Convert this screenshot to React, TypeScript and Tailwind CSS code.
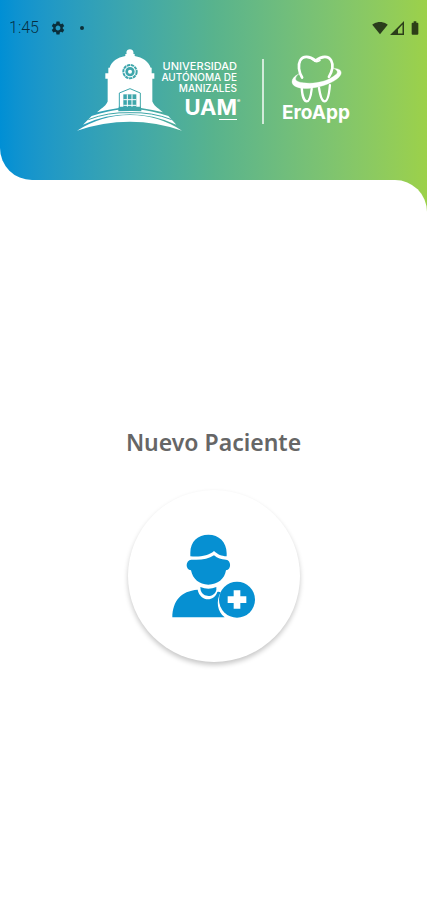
import { MdBatteryFull, MdSettings, MdSignalWifi4Bar } from "react-icons/md";

function StatusBar() {
    return (
        <div className="flex flex-row justify-between items-center h-4 pl-[9px] pr-1 text-black/70">
            <div className="flex flex-row items-center">
                <span className="font-['Roboto'] text-[16px] leading-4 font-light">1:45</span>
                <MdSettings className="ml-[11px] size-4" />
                <span className="ml-[14px] size-1 rounded-full bg-current" />
            </div>

            <div className="flex flex-row items-center">
                <MdSignalWifi4Bar className="size-4" />
                <svg viewBox="0 0 14 14" className="ml-[2px] size-[14px]" fill="currentColor">
                    <path fillRule="evenodd" d="M0 14 14 0V14ZM8 8.500V12.500H12.500V3.500Z" />
                </svg>
                <MdBatteryFull className="ml-[3px] size-4" />
            </div>
        </div>
    );
}

function ChapelLogo() {
    return (
        <svg viewBox="228 147 315 246" className="w-[105px] h-[82px]" fill="white">
            <mask id="chapel" maskUnits="userSpaceOnUse" x="228" y="140" width="320" height="260">
                <rect x="228" y="140" width="320" height="260" fill="white" />
                <g fill="none" stroke="black">
                    <circle cx="387" cy="215" r="20" strokeWidth="6" strokeDasharray="10 2" />
                    <circle cx="387" cy="215" r="10" strokeWidth="8" />
                    <path d="M355 334V279L387 266L418 279V334" strokeWidth="3" />
                </g>
                <path d="M367 283H406V333H367Z" fill="black" />
                <path d="M379 283V333M393 283V333M367 299H406M367 316H406" stroke="white" strokeWidth="3" />
            </mask>
            <g mask="url(#chapel)">
                <path d="M373 168V162H377C371 143 402 143 397 162H401V168C425 172 443 185 449 203H452V220H460V236H454V320H320V236H313V220H322V203H326C331 185 349 172 373 168Z" />
                <path d="M320 305H353V324Q318 329 288 337C298 326 312 321 320 305ZM454 305H420V324Q455 329 486 337C475 326 462 321 454 305Z" />
            </g>
            <path d="M272 348Q325 331 352 329V334Q395 332 421 334V329Q449 331 502 348L526 374Q455 343 387 343Q314 343 246 374Z" />
            <path d="M262 359Q320 336 387 338Q454 336 512 359" fill="none" stroke="#3da6a8" strokeWidth="3" />
            <path d="M228 392Q300 346 387 345Q474 346 543 392Q466 365 387 365Q306 365 228 392Z" />
        </svg>
    );
}

function ToothLogo() {
    return (
        <svg viewBox="876 164 156 145" className="w-[52px] h-12" fill="none" stroke="white" strokeLinecap="round" strokeLinejoin="round">
            <path d="M912 232C902 215 899 194 906 181C915 165 934 167 953 181C972 167 991 165 1000 181C1007 194 1003 213 993 230" strokeWidth="8" />
            <path d="M942 176Q954 189 966 180" strokeWidth="5" />
            <path d="M911 264C912 282 917 304 926 304C936 304 939 284 941 266M963 263C966 283 970 304 980 304C989 304 994 279 996 255" strokeWidth="7" />
            <path d="M902 221C872 236 873 262 918 265C966 266 1026 242 1030 219C1031 208 1020 205 1006 204C1018 209 1023 215 1013 224C992 243 951 253 916 248C889 245 886 235 902 221Z" fill="white" strokeWidth="1" />
        </svg>
    );
}

function PatientIcon() {
    return (
        <svg viewBox="22 28 252 252" className="size-[84px]" fill="#0690d2">
            <path d="M77 95V84C77 50 100 30 131 30C163 30 186 52 186 86V95C170 94 160 90 148 79C131 94 107 97 77 95Z" />
            <path d="M80 105C107 107 131 104 148 92C159 101 169 105 184 105C200 107 201 134 184 137C180 163 159 180 131 180C104 180 84 163 79 137C61 134 62 107 80 105Z" />
            <path d="M23 278C24 229 48 199 99 195C106 230 147 234 158 202C162 200 166 202 168 203C153 231 158 261 180 278Z" />
            <path d="M107 187Q131 197 155 187V196C149 220 115 220 108 197Z" />
            <circle cx="217" cy="225" r="54" />
            <path d="M207 197H227V215H245V235H227V252H207V235H189V215H207Z" fill="white" />
        </svg>
    );
}

export default function App() {
    return (
        <div className="min-h-screen flex flex-col bg-white">
            <header className="h-[180px] pt-5 rounded-bl-[32px] bg-linear-to-r from-[#008fd5] via-[#58b38d] to-[#9cd149]">
                <StatusBar />

                <div className="mt-[13px] flex flex-row justify-center items-start text-white font-['Inter']">
                    <ChapelLogo />
                    <div className="mt-3 -ml-7 flex flex-col items-end text-right">
                        <p className="w-[83px] flex flex-col text-[10px] leading-[11px] font-medium">
                            <span className="text-[11px] leading-[11px]">UNIVERSIDAD</span>
                            <span>AUTÓNOMA DE</span>
                            <span>MANIZALES</span>
                        </p>
                        <p className="relative mt-px text-[22px] leading-6 font-bold">
                            UAM
                            <span className="absolute left-full top-1 text-[5px] leading-[5px]">®</span>
                        </p>
                        <span className="w-[18px] h-px bg-white" />
                    </div>
                    <span className="mt-[10px] ml-[25px] w-[2px] h-[65px] bg-white/70" />
                    <div className="mt-[6px] ml-[18px] flex flex-col items-center">
                        <ToothLogo />
                        <p className="text-[19px] leading-5 font-bold">EroApp</p>
                    </div>
                </div>
            </header>

            <div className="grow flex flex-col bg-linear-to-r from-[#008fd5] via-[#58b38d] to-[#9cd149]">
                <main className="grow flex flex-col justify-center items-center gap-8 pt-2 rounded-tr-[32px] bg-white">
                    <h1 id="new-patient" className="font-['Noto_Sans'] text-[23px] leading-8 font-semibold text-[#666666]">
                        Nuevo Paciente
                    </h1>
                    <button type="button" aria-labelledby="new-patient"
                    className="size-[172px] rounded-full bg-white flex justify-center items-center
                        shadow-[0_3px_5px_rgba(0,0,0,0.22)]">
                        <PatientIcon />
                    </button>
                </main>
            </div>
        </div>
    );
}
